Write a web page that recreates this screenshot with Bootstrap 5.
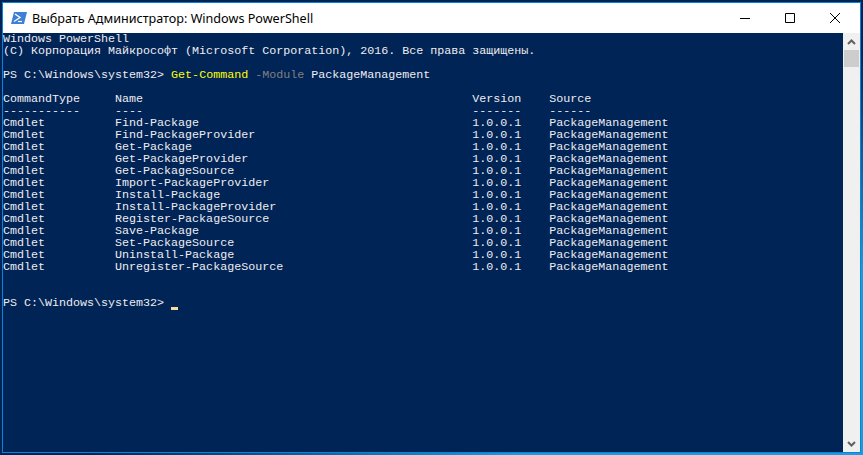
<!doctype html>
<html lang="ru"><head><meta charset="utf-8"><title>PowerShell</title>
<link href="https://cdn.jsdelivr.net/npm/bootstrap@5.3.0/dist/css/bootstrap.min.css" rel="stylesheet">
<style>
html,body{height:100%;margin:0;overflow:hidden}
.desk{height:455px;padding:2px;background:linear-gradient(to bottom right,#012456 55%,#1a9ce0 80%)}
.win{height:451px;border:1px solid #0a84d8}
.ttl{height:30px;background:#fff;color:#000}
.ttl-name{margin-left:5px;padding-top:2px;font:12.6px/1 "Noto Sans","Liberation Sans",sans-serif}
.ico{margin-left:8px}
.wbtn{width:45px;height:30px}
.wbtns{margin-right:3px}
.con{background:#012456;color:#eeedf0;font:11.68px/12px "Liberation Mono",monospace;overflow:hidden}
.ln{height:12px;white-space:pre}
.blk{white-space:pre;margin:0;font:inherit}
.gap1{height:12px}
.gap2{height:24px}
.y{color:#ffff00}.g{color:#808080}
.cur{width:7px;height:3px;background:#f8d9a0;margin-top:10px}
.sb{width:17px;background:#f0f0f0}
.sb svg{display:block;margin:6px auto 5px}
.thumb{height:17px;margin:0 1px;background:#cdcdcd}
.body-row{min-height:0}
</style></head><body>
<div class="desk">
<div class="win d-flex flex-column">
 <div class="ttl d-flex align-items-center flex-shrink-0">
  <svg class="ico" width="16" height="16" viewBox="0 0 16 16"><path d="M3 2h13l-3 12H0z" fill="#3f7fd6"/><path d="M4 4l5 3.5-6 4" fill="none" stroke="#fff" stroke-width="1.4"/><path d="M7 11.5h4" stroke="#fff" stroke-width="1.2"/></svg>
  <span class="ttl-name flex-grow-1">Выбрать Администратор: Windows PowerShell</span>
  <div class="wbtns d-flex">
  <div class="wbtn d-flex align-items-center justify-content-center"><svg width="10" height="10"><path d="M0 5.5h10" stroke="#000"/></svg></div>
  <div class="wbtn d-flex align-items-center justify-content-center"><svg width="10" height="10"><path d="M.5.5h9v9h-9z" fill="none" stroke="#000"/></svg></div>
  <div class="wbtn d-flex align-items-center justify-content-center"><svg width="10" height="10"><path d="M0 0l10 10M10 0L0 10" stroke="#000" fill="none"/></svg></div>
  </div>
 </div>
 <div class="body-row d-flex flex-grow-1">
  <div class="con flex-grow-1">
<pre class="blk">Windows PowerShell
(C) Корпорация Майкрософт (Microsoft Corporation), 2016. Все права защищены.</pre>
<div class="gap1"></div>
<div class="ln d-flex"><span>PS C:\Windows\system32&gt; </span><span class="y">Get-Command </span><span class="g">-Module </span><span>PackageManagement</span></div>
<div class="gap1"></div>
<pre class="blk">CommandType     Name                                               Version    Source
-----------     ----                                               -------    ------
Cmdlet          Find-Package                                       1.0.0.1    PackageManagement
Cmdlet          Find-PackageProvider                               1.0.0.1    PackageManagement
Cmdlet          Get-Package                                        1.0.0.1    PackageManagement
Cmdlet          Get-PackageProvider                                1.0.0.1    PackageManagement
Cmdlet          Get-PackageSource                                  1.0.0.1    PackageManagement
Cmdlet          Import-PackageProvider                             1.0.0.1    PackageManagement
Cmdlet          Install-Package                                    1.0.0.1    PackageManagement
Cmdlet          Install-PackageProvider                            1.0.0.1    PackageManagement
Cmdlet          Register-PackageSource                             1.0.0.1    PackageManagement
Cmdlet          Save-Package                                       1.0.0.1    PackageManagement
Cmdlet          Set-PackageSource                                  1.0.0.1    PackageManagement
Cmdlet          Uninstall-Package                                  1.0.0.1    PackageManagement
Cmdlet          Unregister-PackageSource                           1.0.0.1    PackageManagement</pre>
<div class="gap2"></div>
<div class="ln d-flex"><span>PS C:\Windows\system32&gt; </span><span class="cur"></span></div>
  </div>
  <div class="sb d-flex flex-column flex-shrink-0">
   <svg width="9" height="6" viewBox="0 0 9 6"><path d="M1 5l3.5-3.5L8 5" fill="none" stroke="#606060" stroke-width="2"/></svg>
   <div class="thumb"></div>
   <div class="flex-grow-1"></div>
   <svg width="9" height="6" viewBox="0 0 9 6"><path d="M1 1l3.5 3.5L8 1" fill="none" stroke="#606060" stroke-width="2"/></svg>
  </div>
 </div>
</div>
</div>
<script src="https://cdn.jsdelivr.net/npm/bootstrap@5.3.0/dist/js/bootstrap.bundle.min.js"></script>
</body></html>
